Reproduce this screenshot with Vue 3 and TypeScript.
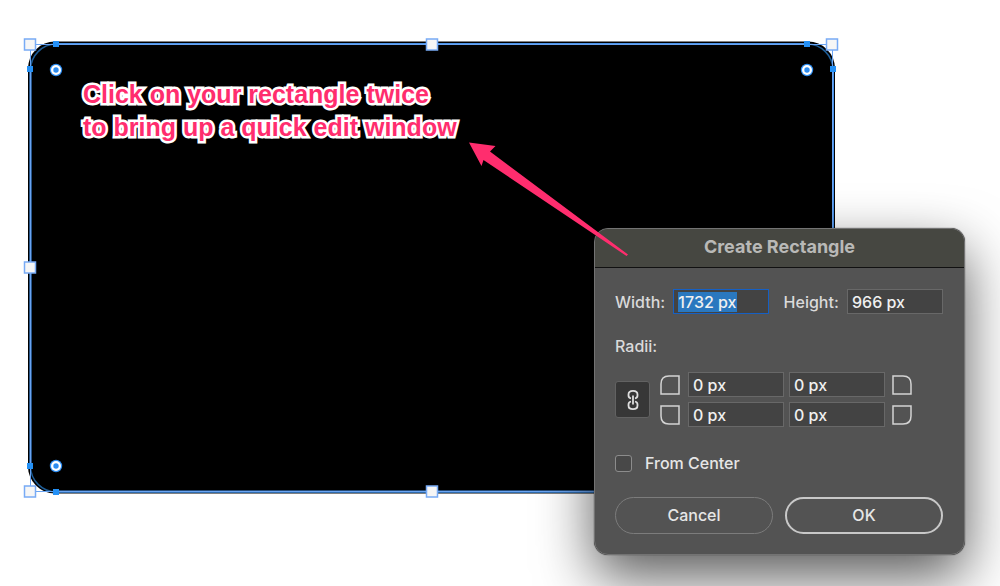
<script setup lang="ts">
import { onMounted, reactive, ref } from 'vue'

interface Point {
  x: number
  y: number
}

const boxHandles: Point[] = [
  { x: 30, y: 44 },
  { x: 432, y: 44 },
  { x: 832, y: 44 },
  { x: 30, y: 267 },
  { x: 30, y: 491 },
  { x: 432, y: 491 },
]

const anchors: Point[] = [
  { x: 56, y: 44 },
  { x: 807, y: 44 },
  { x: 30, y: 69 },
  { x: 833, y: 69 },
  { x: 30, y: 466 },
  { x: 56, y: 492 },
]

const cornerWidgets: Point[] = [
  { x: 56, y: 70 },
  { x: 807, y: 70 },
  { x: 56, y: 466 },
]

const form = reactive({
  width: '1732 px',
  height: '966 px',
  topLeft: '0 px',
  topRight: '0 px',
  bottomLeft: '0 px',
  bottomRight: '0 px',
  fromCenter: false,
})

const widthInput = ref<HTMLInputElement | null>(null)

onMounted(() => {
  widthInput.value?.focus()
  widthInput.value?.select()
})
</script>

<template>
  <main class="canvas">
    <svg class="artwork" width="1000" height="586" aria-hidden="true">
      <rect x="28" y="41.500" width="807" height="452" rx="27" fill="#000" />
      <rect x="30.500" y="44" width="802.500" height="448" rx="26" fill="none" stroke="#1d5c96" stroke-width="1.500" />
      <path d="M30.500 70V466M56 44H807M833 70V466M56 491.500H807" fill="none" stroke="#4a93ea" stroke-width="2" />
      <path d="M30.500 44.500H832.500V491.500H30.500Z" fill="none" stroke="#6aa4f2" stroke-width="1" />
      <rect v-for="(p, i) in anchors" :key="'a' + i" :x="p.x - 3" :y="p.y - 3" width="6" height="6" fill="#2490f5" />
      <rect
        v-for="(p, i) in boxHandles"
        :key="'h' + i"
        :x="p.x - 5.5"
        :y="p.y - 5"
        width="11"
        height="11"
        fill="#f6f6f6"
        stroke="#78abf5"
        stroke-width="1.500"
      />
      <g v-for="(p, i) in cornerWidgets" :key="'c' + i">
        <circle :cx="p.x" :cy="p.y" r="6.200" fill="#2d8cf0" />
        <circle :cx="p.x" :cy="p.y" r="5" fill="#fff" />
        <circle :cx="p.x" :cy="p.y" r="2.700" fill="#2d8cf0" />
      </g>
    </svg>

    <p class="note">Click on your rectangle twice<br />to bring up a quick edit window</p>

    <form class="dialog" role="dialog" aria-labelledby="dialog-title" @submit.prevent>
      <h1 id="dialog-title" class="title">Create Rectangle</h1>
      <div class="body">
        <div class="size-row">
          <label for="width">Width:</label>
          <input id="width" ref="widthInput" v-model="form.width" class="field" type="text" />
          <label class="height-label" for="height">Height:</label>
          <input id="height" v-model="form.height" class="field" type="text" />
        </div>

        <div id="radii" class="radii-label">Radii:</div>
        <div class="radii" role="group" aria-labelledby="radii">
          <button class="link" type="button" aria-label="Link radii">
            <svg width="12" height="22" viewBox="0 0 12 22" fill="none" stroke="#dedede" stroke-width="1.800">
              <path d="M4 9.500C2 9 1.500 8 1.500 6.500V5.500C1.500 3.200 3.200 1.800 6 1.800S10.500 3.200 10.500 5.500V6.500C10.500 8 10 9 8 9.500" />
              <path d="M4 12.500C2 13 1.500 14 1.500 15.500V16.500C1.500 18.800 3.200 20.200 6 20.200S10.500 18.800 10.500 16.500V15.500C10.500 14 10 13 8 12.500" />
              <path d="M6 6.500V15.500" />
            </svg>
          </button>
          <div class="radii-grid">
            <svg class="corner" viewBox="0 0 20 20"><path d="M19 1V19H1V9Q1 1 9 1Z" /></svg>
            <input v-model="form.topLeft" class="field" type="text" aria-label="Top left radius" />
            <input v-model="form.topRight" class="field" type="text" aria-label="Top right radius" />
            <svg class="corner right" viewBox="0 0 20 20"><path d="M1 1V19H19V9Q19 1 11 1Z" /></svg>
            <svg class="corner" viewBox="0 0 20 20"><path d="M19 19V1H1V11Q1 19 9 19Z" /></svg>
            <input v-model="form.bottomLeft" class="field" type="text" aria-label="Bottom left radius" />
            <input v-model="form.bottomRight" class="field" type="text" aria-label="Bottom right radius" />
            <svg class="corner right" viewBox="0 0 20 20"><path d="M1 19V1H19V11Q19 19 11 19Z" /></svg>
          </div>
        </div>

        <label class="check">
          <input v-model="form.fromCenter" type="checkbox" />
          From Center
        </label>

        <div class="actions">
          <button class="pill" type="button">Cancel</button>
          <button class="pill primary" type="submit">OK</button>
        </div>
      </div>
    </form>

    <svg class="arrow" width="160" height="116" viewBox="0 0 160 116" aria-hidden="true">
      <path d="M1 2.500L27.500 6L22 11.500L160 114.500L158.500 116L15.500 20L13.500 26Z" fill="#ff2d6e" />
    </svg>
  </main>
</template>

<style>
body {
  margin: 0;
  background: #fff;
}
</style>

<style scoped>
.canvas {
  position: relative;
  min-height: 100vh;
  overflow: hidden;
  background: #fff;
  color: #dadada;
  font: 500 16px/24px Inter, "Liberation Sans", sans-serif;
}

.artwork {
  position: absolute;
  top: 0;
  left: 0;
}

.note {
  position: absolute;
  top: 78px;
  left: 83px;
  margin: 0;
  color: #ff2d6e;
  font: bold 25px/33px "Liberation Sans", sans-serif;
  white-space: nowrap;
  -webkit-text-stroke: 5px #fff;
  paint-order: stroke fill;
}

.dialog {
  position: absolute;
  top: 228px;
  left: 594px;
  box-sizing: border-box;
  width: 371px;
  overflow: hidden;
  border: 1px solid #737373;
  border-radius: 14px;
  background: #535353;
  box-shadow: 0 0 1px #111, 0 22px 56px rgba(0, 0, 0, 0.65);
}

.title {
  margin: 0;
  padding-bottom: 2px;
  border-bottom: 1px solid #111;
  background: #464741;
  color: #b9b9b7;
  font-size: 18px;
  font-weight: 700;
  line-height: 36px;
  text-align: center;
}

.body {
  padding: 21px 21px 20px 20px;
}

.size-row {
  display: flex;
  align-items: center;
  justify-content: space-between;
}

.height-label {
  margin-left: 6px;
}

.field {
  box-sizing: border-box;
  width: 96px;
  height: 25px;
  padding: 0 4px;
  border: 1px solid #686868;
  outline: none;
  background: #434343;
  color: #f0f0f0;
  font: inherit;
  line-height: 22px;
}

.field:focus {
  border-color: #1660c4;
}

.field::selection {
  background: #2a78bf;
  color: #f0f0f0;
}

.radii-label {
  margin-top: 20px;
}

.radii {
  display: flex;
  align-items: center;
  gap: 10px;
  margin-top: 14px;
}

.link {
  display: flex;
  flex: none;
  align-items: center;
  justify-content: center;
  width: 35px;
  height: 37px;
  padding: 0;
  border: 1px solid #626262;
  border-radius: 3px;
  background: #373737;
}

.radii-grid {
  display: grid;
  grid-template-columns: 23px 96px 96px 24px;
  align-items: center;
  gap: 5px;
}

.corner {
  width: 20px;
  height: 20px;
  fill: none;
  stroke: #d4d4d4;
  stroke-width: 1.5;
}

.corner.right {
  justify-self: center;
}

.check {
  display: flex;
  align-items: center;
  gap: 13px;
  width: max-content;
  margin-top: 24px;
  color: #e6e6e6;
}

.check input {
  appearance: none;
  box-sizing: border-box;
  width: 17px;
  height: 17px;
  margin: 0;
  border: 1px solid #8c8c8c;
  border-radius: 3px;
  background: #484848;
}

.check input:checked {
  background: #2a78bf;
}

.actions {
  display: grid;
  grid-template-columns: 1fr 1fr;
  gap: 12px;
  margin-top: 22px;
}

.pill {
  height: 37px;
  padding: 0 0 2px;
  border: 1px solid #7c7c7c;
  border-radius: 19px;
  background: transparent;
  color: #e6e6e6;
  font: inherit;
}

.pill.primary {
  border: 2px solid #c8c8c8;
}

.arrow {
  position: absolute;
  top: 140px;
  left: 468px;
  pointer-events: none;
}
</style>
